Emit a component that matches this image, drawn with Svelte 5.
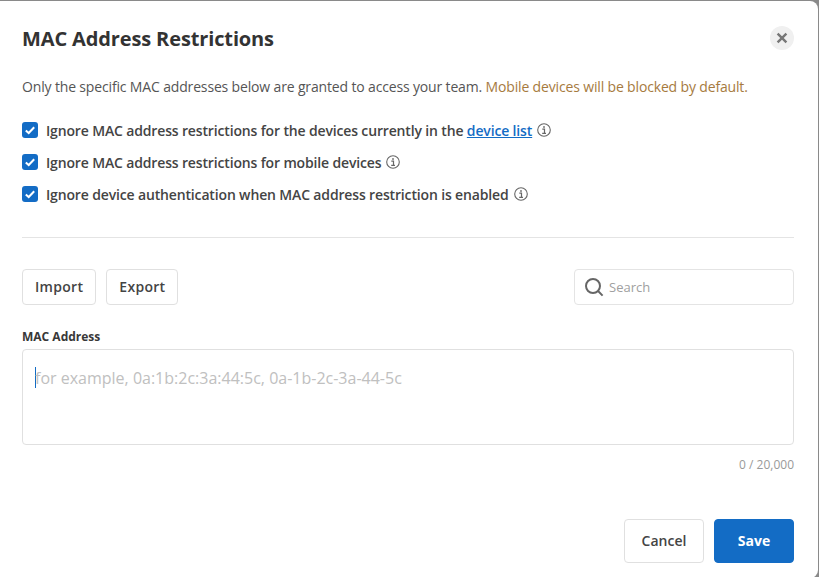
<script lang="ts">
  const options = [
    { id: 'devices', text: 'Ignore MAC address restrictions for the devices currently in the ', link: 'device list' },
    { id: 'mobile', text: 'Ignore MAC address restrictions for mobile devices' },
    { id: 'auth', text: 'Ignore device authentication when MAC address restriction is enabled' }
  ];
</script>

{#snippet infoIcon()}
  <svg class="info" viewBox="0 0 14 14" width="14" height="14" aria-hidden="true">
    <circle cx="7" cy="7" r="6.3" fill="none" stroke="#666" stroke-width="1.1" />
    <path d="M5.3 6.2H7.5V10.2M5.2 10.3H9" fill="none" stroke="#666" stroke-width="1.2" />
    <rect x="6.2" y="3.2" width="1.6" height="1.6" fill="#666" />
  </svg>
{/snippet}

<div class="backdrop">
  <div class="modal">
    <header class="head">
      <h1>MAC Address Restrictions</h1>
      <button class="close" aria-label="Close">
        <svg viewBox="0 0 12 12" width="12" height="12" aria-hidden="true">
          <path d="M1.6 1.6L10.4 10.4M10.4 1.6L1.6 10.4" stroke="#777" stroke-width="2.4" fill="none" />
        </svg>
      </button>
    </header>

    <p class="intro">
      Only the specific MAC addresses below are granted to access your team.
      <span class="warn">Mobile devices will be blocked by default.</span>
    </p>

    <div class="options">
      {#each options as opt (opt.id)}
        <label class="option">
          <span class="check">
            <svg viewBox="0 0 16 16" width="16" height="16" aria-hidden="true">
              <path d="M3.8 8.4L6.7 11L12.2 5.2" stroke="#fff" stroke-width="2" fill="none" />
            </svg>
          </span>
          <span>{opt.text}{#if opt.link}<a href="#list">{opt.link}</a>{/if}</span>
          {@render infoIcon()}
        </label>
      {/each}
    </div>

    <hr />

    <div class="toolbar">
      <button class="btn">Import</button>
      <button class="btn">Export</button>
      <div class="search">
        <svg viewBox="0 0 20 20" width="20" height="20" aria-hidden="true">
          <circle cx="9" cy="9" r="7" fill="none" stroke="#666" stroke-width="2" />
          <path d="M13.8 13.8L18.6 18.6" stroke="#666" stroke-width="2" fill="none" />
        </svg>
        <span>Search</span>
      </div>
    </div>

    <div class="field-label">MAC Address</div>
    <div class="textarea">
      <i class="caret"></i><span>for example, 0a:1b:2c:3a:44:5c, 0a-1b-2c-3a-44-5c</span>
    </div>
    <div class="count">0 / 20,000</div>

    <footer class="foot">
      <button class="action cancel">Cancel</button>
      <button class="action save">Save</button>
    </footer>
  </div>
</div>

<style>
  :global(body) {
    margin: 0;
    background: #8a8a8a;
    font-family: "Open Sans", "Liberation Sans", sans-serif;
    overflow: hidden;
  }

  .backdrop {
    height: 577px;
    padding-top: 1px;
    box-sizing: border-box;
    overflow: hidden;
  }

  .modal {
    width: 818px;
    height: 577px;
    box-sizing: border-box;
    padding: 0 24px 0 22px;
    background: #fff;
    border-radius: 0 8px 8px 0;
    color: #383838;
    font-size: 14px;
  }

  .head {
    display: flex;
    justify-content: space-between;
    align-items: center;
    height: 24px;
    padding-top: 25px;
  }

  h1 {
    margin: 0;
    padding-top: 2px;
    font-size: 20px;
    font-weight: 700;
    line-height: 28px;
    letter-spacing: -0.13px;
    color: #333;
  }

  .close {
    display: flex;
    align-items: center;
    justify-content: center;
    width: 24px;
    height: 24px;
    padding: 0;
    border: 0;
    border-radius: 50%;
    background: #f0f0f0;
  }

  .intro {
    margin: 26px 0 0;
    line-height: 22px;
    letter-spacing: -0.155px;
    color: #555;
  }

  .warn {
    color: #a67a3e;
  }

  .options {
    display: flex;
    flex-direction: column;
    gap: 10px;
    margin-top: 21px;
  }

  .option {
    display: flex;
    align-items: center;
    height: 22px;
    font-weight: 600;
    letter-spacing: -0.15px;
    color: #444;
  }

  .check {
    display: flex;
    width: 16px;
    height: 16px;
    margin-right: 8px;
    border-radius: 3px;
    background: #136cc5;
  }

  .option a {
    color: #136cc5;
    text-decoration: underline;
  }

  .info {
    margin-left: 5px;
  }

  hr {
    margin: 32px 0 0;
    border: 0;
    border-top: 1px solid #e4e4e4;
  }

  .toolbar {
    display: flex;
    gap: 10px;
    margin-top: 31px;
  }

  .btn {
    height: 36px;
    padding: 0 12px 2px;
    border: 1px solid #e0e0e0;
    border-radius: 4px;
    background: #fff;
    font: 600 14px "Open Sans", sans-serif;
    letter-spacing: 0.3px;
    color: #444;
  }

  .search {
    display: flex;
    align-items: center;
    gap: 5px;
    width: 220px;
    height: 36px;
    box-sizing: border-box;
    margin-left: auto;
    padding-left: 9px;
    border: 1px solid #e4e4e4;
    border-radius: 4px;
    font-size: 13px;
    color: #a0a0a0;
  }

  .field-label {
    margin-top: 23px;
    font-size: 12px;
    font-weight: 700;
    line-height: 18px;
    color: #383838;
  }

  .textarea {
    display: flex;
    align-items: flex-start;
    height: 96px;
    box-sizing: border-box;
    margin-top: 3px;
    padding: 17px 12px;
    border: 1px solid #e0e0e0;
    border-radius: 4px;
    font-size: 16px;
    line-height: 22px;
    color: #c0c0c0;
  }

  .caret {
    width: 1px;
    height: 21px;
    margin-right: -1px;
    background: #136cc5;
  }

  .count {
    margin-top: 12px;
    font-size: 12px;
    line-height: 16px;
    text-align: right;
    color: #999;
  }

  .foot {
    display: flex;
    justify-content: flex-end;
    gap: 10px;
    margin-top: 46px;
  }

  .action {
    width: 80px;
    height: 44px;
    padding-bottom: 3px;
    border-radius: 4px;
    font: 600 14px "Open Sans", sans-serif;
  }

  .cancel {
    border: 1px solid #e0e0e0;
    background: #fff;
    color: #444;
  }

  .save {
    border: 1px solid #136cc5;
    background: #136cc5;
    color: #fff;
    font-weight: 700;
  }
</style>
